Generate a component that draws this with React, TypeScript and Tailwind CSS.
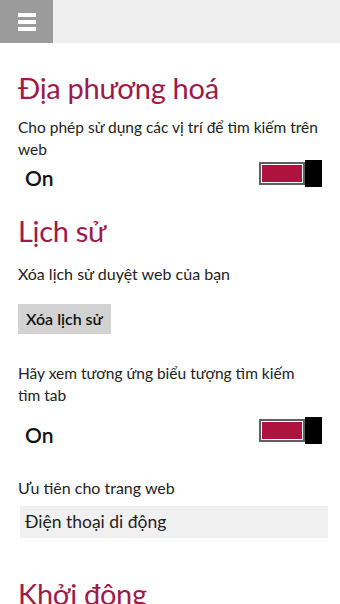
import React from "react";

function Toggle() {
  return (
    <div className="flex items-center">
      <div className="w-[46px] h-[23px] border-2 border-[#5f5f5f] bg-white p-[1px]">
        <div className="w-full h-full bg-[#b0123f]" />
      </div>
      <div className="w-[17px] h-[27px] bg-black" />
    </div>
  );
}

function OnRow() {
  return (
    <div className="flex items-start justify-between h-[27px]">
      <div className="ml-[7px] mt-[4px] text-[21px] leading-[27px] font-semibold text-[#111]">On</div>
      <Toggle />
    </div>
  );
}

export default function App() {
  return (
    <div className="w-[340px] h-[604px] overflow-hidden bg-white font-['Lato',sans-serif] text-[#222]">
      <div className="h-[43px] bg-[#efefef] flex">
        <div className="w-[53px] h-full bg-[#9b9b9b] flex flex-col items-center justify-center gap-[3px]">
          <div className="w-[18px] h-[4px] bg-white" />
          <div className="w-[18px] h-[4px] bg-white" />
          <div className="w-[18px] h-[4px] bg-white" />
        </div>
      </div>
      <div className="px-[18px]">
        <h1 className="mt-[27px] text-[29px] tracking-[-0.3px] leading-[36px] text-[#9d1b4b]">Địa phương hoá</h1>
        <p className="mt-[10px] mr-[-18px] text-[15.5px] leading-[22px]">
          Cho phép sử dụng các vị trí để tìm kiếm trên
          <br />
          web
        </p>
        <OnRow />
        <h1 className="mt-[26px] text-[29px] tracking-[-0.3px] leading-[36px] text-[#9d1b4b]">Lịch sử</h1>
        <p className="mt-[14px] text-[16px] leading-[22px]">Xóa lịch sử duyệt web của bạn</p>
        <div className="mt-[19px] w-[93px] h-[30px] bg-[#d2d2d2] flex items-center justify-center text-[16px] font-semibold text-[#111]">Xóa lịch sử</div>
        <p className="mt-[28px] mr-[-18px] text-[15.5px] leading-[22px]">
          Hãy xem tương ứng biểu tượng tìm kiếm
          <br />
          tìm tab
        </p>
        <div className="mt-[11px]">
          <OnRow />
        </div>
        <p className="mt-[33px] text-[16px] leading-[22px]">Ưu tiên cho trang web</p>
        <div className="mt-[7px] ml-[2px] w-[308px] h-[32px] bg-[#f0f0f0] pl-[5px] pt-[1px] text-[17.5px] leading-[30px]">Điện thoại di động</div>
        <h1 className="mt-[38px] text-[29px] tracking-[-0.3px] leading-[36px] text-[#9d1b4b]">Khởi động</h1>
      </div>
    </div>
  );
}
